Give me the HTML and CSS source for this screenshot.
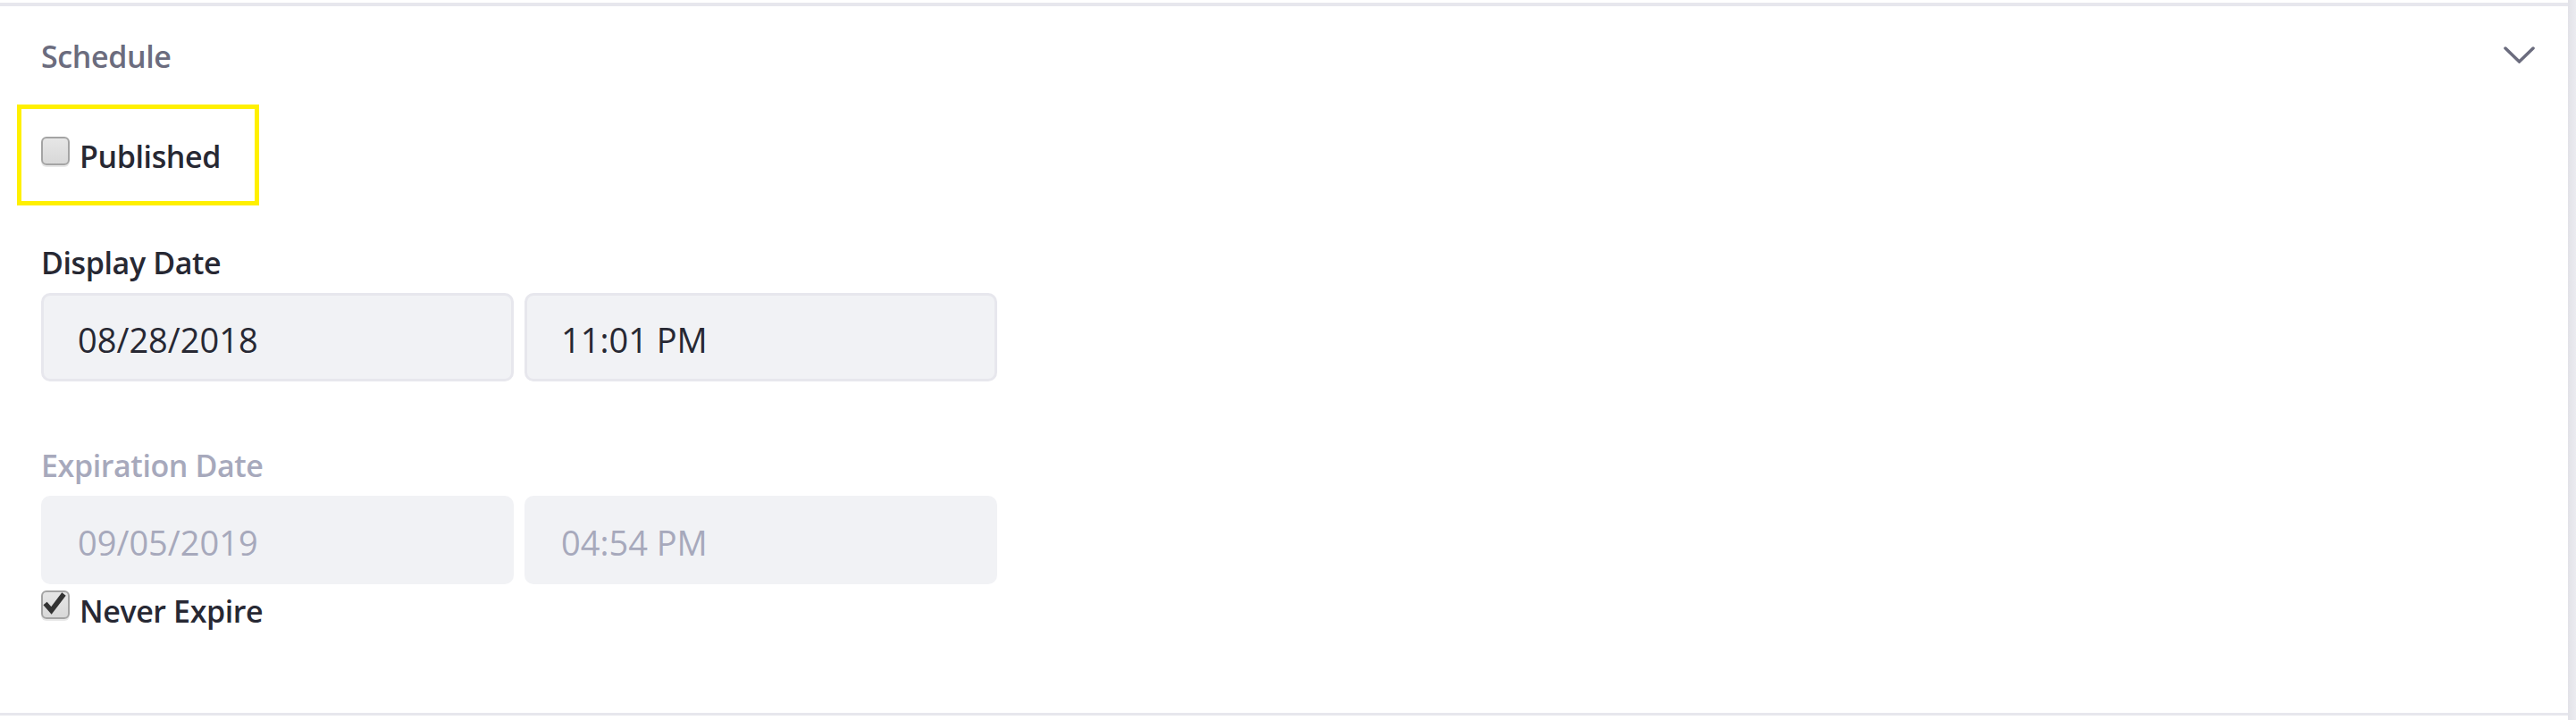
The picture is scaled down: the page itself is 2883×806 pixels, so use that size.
FILE: index.html
```html
<!DOCTYPE html>
<html lang="en">
<head>
<meta charset="utf-8">
<title>Schedule</title>
<link rel="stylesheet" href="styles.css">
</head>
<body>
<div class="page">
  <section class="panel">
    <header class="panel-header">
      <h2 class="panel-title">Schedule</h2>
      <svg class="chevron" width="35" height="19" viewBox="0 0 35 19" aria-hidden="true">
        <polyline points="2,2 17.5,17 33,2" fill="none" stroke="#6b6c7e" stroke-width="3.5" stroke-linecap="round" stroke-linejoin="miter"/>
      </svg>
    </header>
    <div class="panel-body">
      <div class="highlight">
        <div class="check-row">
          <span class="checkbox"></span>
          <span class="check-label">Published</span>
        </div>
      </div>

      <div class="field field-first">
        <div class="field-label">Display Date</div>
        <div class="input-row">
          <div class="input">08/28/2018</div>
          <div class="input">11:01 PM</div>
        </div>
      </div>

      <div class="field field-disabled">
        <div class="field-label">Expiration Date</div>
        <div class="input-row">
          <div class="input">09/05/2019</div>
          <div class="input">04:54 PM</div>
        </div>
      </div>

      <div class="check-row check-row-never">
        <span class="checkbox checkbox-checked">
          <svg width="28" height="28" viewBox="0 0 28 28" aria-hidden="true">
            <polyline points="2.5,13.5 9.5,21.5 23.5,3" fill="none" stroke="#333" stroke-width="5.5" stroke-linejoin="miter"/>
          </svg>
        </span>
        <span class="check-label">Never Expire</span>
      </div>
    </div>
  </section>
  <div class="edge"></div>
</div>
</body>
</html>
```

FILE: styles.css
```css
html, body {
  margin: 0;
  padding: 0;
  background: #ffffff;
}

body {
  font-family: "Open Sans", "Noto Sans", sans-serif;
  color: #272833;
}

.page {
  display: flex;
  height: 806px;
}

.panel {
  flex: 1;
  margin-top: 3px;
  height: 798px;
  box-sizing: border-box;
  border-top: 4px solid #e7e7ed;
  border-bottom: 3px solid #e7e7ed;
  padding-left: 46px;
}

.edge {
  width: 9px;
  background: linear-gradient(to right, #e2e2e8, #ebebf0);
}

.panel-header {
  display: flex;
  justify-content: space-between;
  align-items: flex-start;
  padding-top: 36px;
  padding-right: 37px;
}

.panel-title {
  margin: 0;
  font-size: 34px;
  line-height: 40px;
  font-weight: 600;
  color: #6b6c7e;
  letter-spacing: -0.4px;
}

.chevron {
  display: block;
  margin-top: 9px;
}

.highlight {
  margin-top: 34px;
  margin-left: -27px;
  width: 271px;
  box-sizing: border-box;
  border: 5px solid #fff000;
  padding: 31px 0 30px 22px;
}

.check-row {
  display: flex;
  align-items: flex-start;
  gap: 11px;
}

.checkbox {
  position: relative;
  width: 32px;
  height: 32px;
  box-sizing: border-box;
  border: 2.5px solid #a4a4a4;
  border-radius: 6px;
  background: linear-gradient(#e6e6e6, #d8d8d8);
  box-shadow: 0 2px 0 #e8e8e8;
  flex: none;
}

.checkbox-checked svg {
  display: block;
  margin: -1px 0 0 0;
}

.check-label {
  font-size: 34px;
  line-height: 40px;
  font-weight: 600;
  padding-top: 2px;
  letter-spacing: -0.4px;
  color: #272833;
}

.field-first {
  margin-top: 44px;
}

.field-disabled {
  margin-top: 74px;
}

.field-label {
  font-size: 34px;
  line-height: 40px;
  font-weight: 600;
  letter-spacing: -0.4px;
  margin-bottom: 14px;
  color: #272833;
}

.input-row {
  display: flex;
  gap: 12px;
}

.input {
  width: 529px;
  height: 99px;
  box-sizing: border-box;
  border: 3px solid #e7e7ed;
  border-radius: 10px;
  background: #f1f2f5;
  padding: 26px 38px 0;
  font-size: 38px;
  line-height: 46px;
  color: #272833;
}

.field-disabled .field-label {
  color: #a7a9bc;
}

.field-disabled .input {
  border-color: #f1f2f5;
  color: #a7a9bc;
}

.check-row-never {
  margin-top: 7px;
}

.check-row-never .check-label {
  padding-top: 3px;
}
```
